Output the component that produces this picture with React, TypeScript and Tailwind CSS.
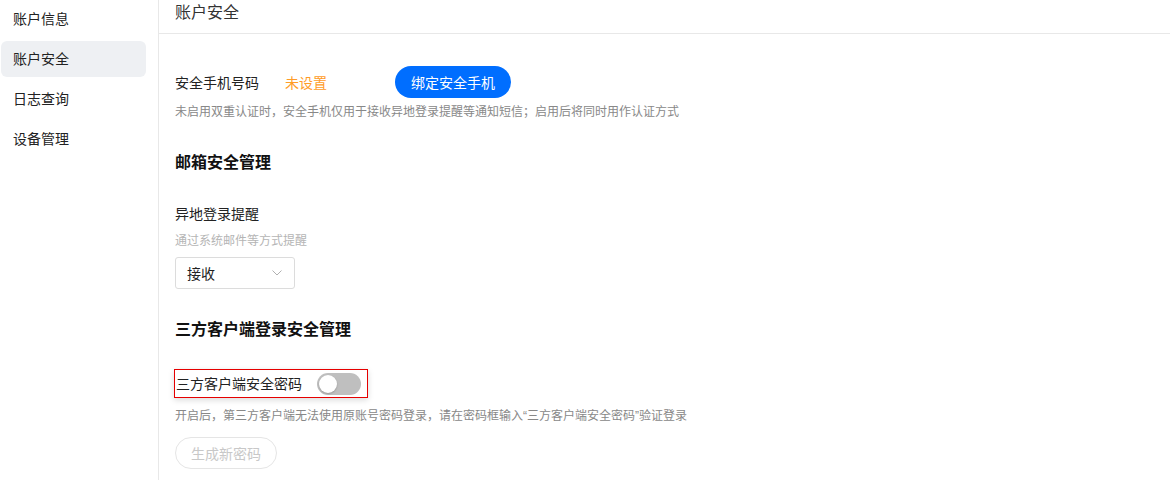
import React from "react";

const font = { fontFamily: '"Noto Sans CJK SC", "Liberation Sans", sans-serif' };
const latin = { fontFamily: '"Liberation Sans", sans-serif' };

const navItems = ["账户信息", "账户安全", "日志查询", "设备管理"];

function Sidebar() {
  return (
    <aside className="w-[159px] shrink-0 border-r border-[#e8e8e8] pl-[1px] pr-[12px]">
      <ul className="flex flex-col gap-[4px] pt-[1px]">
        {navItems.map((item) => (
          <li
            key={item}
            className={
              "h-[36px] flex items-center pl-[12px] pb-[2px] rounded-[6px] text-[14px] text-[#222] " +
              (item === "账户安全" ? "bg-[#eef0f3]" : "")
            }
          >
            {item}
          </li>
        ))}
      </ul>
    </aside>
  );
}

function Toggle() {
  return (
    <span className="relative inline-block w-[44px] h-[22px] rounded-full bg-[#bfbfbf]">
      <span className="absolute left-[2px] top-[2px] w-[18px] h-[18px] rounded-full bg-white shadow-[0_1px_2px_rgba(0,0,0,0.2)]" />
    </span>
  );
}

export default function App() {
  return (
    <div className="flex w-[1170px] h-[480px] bg-white overflow-hidden" style={font}>
      <Sidebar />
      <main className="flex-1 flex flex-col">
        <div className="h-[34px] border-b border-[#e8e8e8] pl-[16px]">
          <h1 className="text-[16px] leading-[22px] text-[#333]">账户安全</h1>
        </div>
        <div className="pl-[16px]">
          <div className="mt-[32px] flex items-center h-[32px]">
            <span className="w-[110px] text-[14px] text-[#222]">安全手机号码</span>
            <span className="w-[110px] text-[14px] text-[#ff9c28]">未设置</span>
            <button className="h-[32px] w-[116px] rounded-full bg-[#006eff] text-white text-[14px]">
              绑定安全手机
            </button>
          </div>
          <p className="mt-[3px] text-[12px] leading-[20px] text-[#888]">
            未启用双重认证时，安全手机仅用于接收异地登录提醒等通知短信；启用后将同时用作认证方式
          </p>

          <h2 className="mt-[29px] text-[16px] leading-[22px] font-bold text-[#111]">邮箱安全管理</h2>
          <div className="mt-[30px] text-[14px] leading-[22px] text-[#222]">异地登录提醒</div>
          <div className="mt-[6px] text-[12px] leading-[20px] text-[#b5b5b5]">通过系统邮件等方式提醒</div>
          <div className="mt-[7px] w-[120px] h-[32px] border border-[#dcdcdc] rounded-[3px] flex items-center justify-between pl-[11px] pr-[12px]">
            <span className="text-[14px] text-[#222]">接收</span>
            <svg width="10" height="6" viewBox="0 0 10 6" fill="none">
              <path d="M0.5 0.5 L5 5 L9.5 0.5" stroke="#b0b0b0" strokeWidth="1" />
            </svg>
          </div>

          <h2 className="mt-[28px] text-[16px] leading-[22px] font-bold text-[#111]">三方客户端登录安全管理</h2>
          <div className="mt-[30px] -ml-[1px] w-[194px] h-[29px] border border-[#e60000] shadow-[0_2px_6px_rgba(0,0,0,0.15)] flex items-center gap-[15px] pl-[1px]">
            <span className="text-[14px] text-[#222]">三方客户端安全密码</span>
            <Toggle />
          </div>
          <p className="mt-[7px] text-[12px] leading-[20px] text-[#888]">
            开启后，第三方客户端无法使用原账号密码登录，请在密码框输入<span style={latin}>“</span>三方客户端安全密码<span style={latin}>”</span>验证登录
          </p>
          <button className="mt-[11px] h-[32px] w-[102px] rounded-full border border-[#e5e5e5] text-[14px] text-[#c8c8c8]">
            生成新密码
          </button>
        </div>
      </main>
    </div>
  );
}
